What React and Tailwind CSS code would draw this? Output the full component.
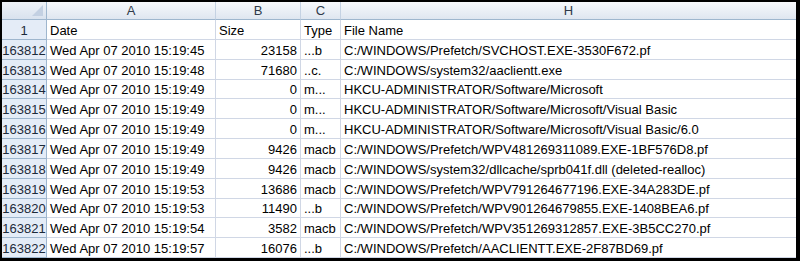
import React from "react";

const rows = [
  ["163812", "Wed Apr 07 2010 15:19:45", "23158", "...b", "C:/WINDOWS/Prefetch/SVCHOST.EXE-3530F672.pf"],
  ["163813", "Wed Apr 07 2010 15:19:48", "71680", "..c.", "C:/WINDOWS/system32/aaclientt.exe"],
  ["163814", "Wed Apr 07 2010 15:19:49", "0", "m...", "HKCU-ADMINISTRATOR/Software/Microsoft"],
  ["163815", "Wed Apr 07 2010 15:19:49", "0", "m...", "HKCU-ADMINISTRATOR/Software/Microsoft/Visual Basic"],
  ["163816", "Wed Apr 07 2010 15:19:49", "0", "m...", "HKCU-ADMINISTRATOR/Software/Microsoft/Visual Basic/6.0"],
  ["163817", "Wed Apr 07 2010 15:19:49", "9426", "macb", "C:/WINDOWS/Prefetch/WPV481269311089.EXE-1BF576D8.pf"],
  ["163818", "Wed Apr 07 2010 15:19:49", "9426", "macb", "C:/WINDOWS/system32/dllcache/sprb041f.dll (deleted-realloc)"],
  ["163819", "Wed Apr 07 2010 15:19:53", "13686", "macb", "C:/WINDOWS/Prefetch/WPV791264677196.EXE-34A283DE.pf"],
  ["163820", "Wed Apr 07 2010 15:19:53", "11490", "...b", "C:/WINDOWS/Prefetch/WPV901264679855.EXE-1408BEA6.pf"],
  ["163821", "Wed Apr 07 2010 15:19:54", "3582", "macb", "C:/WINDOWS/Prefetch/WPV351269312857.EXE-3B5CC270.pf"],
  ["163822", "Wed Apr 07 2010 15:19:57", "16076", "...b", "C:/WINDOWS/Prefetch/AACLIENTT.EXE-2F87BD69.pf"],
];

const colHead =
  "flex items-center justify-center border-r border-b border-r-[#c5d2e3] border-b-[#9eb6ce] bg-gradient-to-b from-[#f7f9fc] to-[#dfe6f0] text-[#2f3a4a]";
const rowHead =
  "flex items-end justify-center pb-[1px] border-b border-r border-[#9eb6ce] bg-[#e4ecf7] text-[#1d2a3a] min-h-0";
const cell =
  "flex items-end pb-[1px] px-[3px] border-b border-r border-[#d0d7e5] whitespace-nowrap overflow-hidden min-h-0";

export default function App() {
  return (
    <div
      className="w-[800px] h-[261px] bg-black pt-[2px] pl-[2px] pr-[4px] pb-[3px] overflow-hidden"
      style={{ fontFamily: "'Liberation Sans', Arial, sans-serif" }}
    >
      <div className="grid h-[256px] bg-white text-[13px] leading-[15px] text-black grid-cols-[45px_169px_85px_40px_1fr] grid-rows-[18px_repeat(12,minmax(0,1fr))]">
        {/* Column header row */}
        <div className="relative border-r border-b border-[#9eb6ce] bg-gradient-to-b from-[#eef2f8] to-[#d9e2ee]">
          <div className="absolute right-[3px] bottom-[3px] w-0 h-0 border-l-[11px] border-l-transparent border-b-[11px] border-b-[#c3d0e2]" />
        </div>
        <div className={colHead}>A</div>
        <div className={colHead}>B</div>
        <div className={colHead}>C</div>
        <div className={`${colHead} border-r-0`}>H</div>

        {/* Title row */}
        <div className={rowHead}>1</div>
        <div className={cell}>Date</div>
        <div className={cell}>Size</div>
        <div className={cell}>Type</div>
        <div className={`${cell} border-r-0`}>File Name</div>

        {rows.map(([n, date, size, type, name]) => (
          <React.Fragment key={n}>
            <div className={rowHead}>{n}</div>
            <div className={cell}>{date}</div>
            <div className={`${cell} justify-end`}>{size}</div>
            <div className={cell}>{type}</div>
            <div className={`${cell} border-r-0`}>{name}</div>
          </React.Fragment>
        ))}
      </div>
    </div>
  );
}
